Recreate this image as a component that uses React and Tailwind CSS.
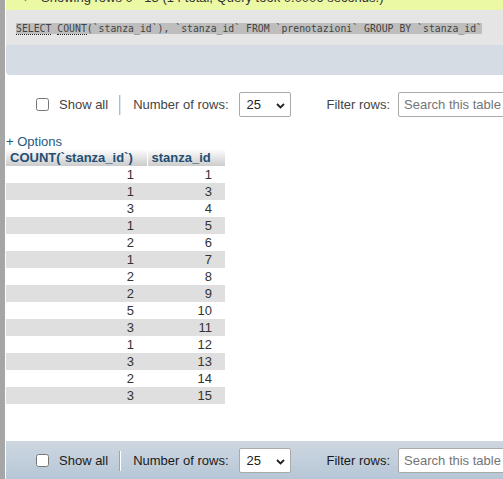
const rows = [
  [1, 1], [1, 3], [3, 4], [1, 5], [2, 6], [1, 7], [2, 8],
  [2, 9], [5, 10], [3, 11], [1, 12], [3, 13], [2, 14], [3, 15],
];

function NavRow({ bar }) {
  return (
    <div
      className={
        'flex items-center h-[39px] pl-[30px] text-[13px] leading-[15px] whitespace-nowrap ' +
        (bar ? 'bg-gradient-to-b from-[#ced7e1] to-[#b6c6d6] text-[#1a1a1a]' : 'text-[#444]')
      }
    >
      <input type="checkbox" readOnly className="w-[13px] h-[13px] m-0 shrink-0" />
      <span className="ml-[10px]">Show all</span>
      <span
        className={
          'ml-[11px] h-[20px] w-[2px] shrink-0 ' +
          (bar ? 'border-l border-[#9aa4ae] border-r-white border-r' : 'border-l border-[#a9bdd2] border-r border-r-[#dbe5ef]')
        }
      />
      <span className="ml-[12px]">Number of rows:</span>
      <div className="ml-[10px] relative flex items-center w-[52px] h-[25px] shrink-0 bg-white border border-[#aaa] rounded-[2px] pl-[7px] text-[#222]">
        25
        <svg className="absolute right-[5px] top-[10px]" width="9" height="6" viewBox="0 0 9 6">
          <path d="M1 1 L4.5 4.5 L8 1" fill="none" stroke="#222" strokeWidth="1.8" />
        </svg>
      </div>
      <span className="ml-[36px]">Filter rows:</span>
      <div className="ml-[8px] flex items-center w-[170px] h-[25px] shrink-0 bg-white border border-[#aaa] rounded-[2px] pl-[5px] text-[#757575]">
        Search this table
      </div>
    </div>
  );
}

export default function App() {
  return (
    <div className="flex w-[503px] h-[479px] overflow-hidden bg-white font-['Liberation_Sans',Arial,sans-serif]">
      {/* left frame edge */}
      <div className="w-[5px] shrink-0 bg-[#a6a6a6]" />
      <div className="ml-px flex-1 min-w-0 flex flex-col">
        {/* success message, mostly scrolled out of view */}
        <div className="h-[10px] overflow-hidden bg-[#ebf8a4] shrink-0">
          <div className="-mt-[10px] flex items-center h-[15px] text-[13px] leading-[15px] text-[#333] whitespace-nowrap">
            <svg className="ml-[15px] mt-[-4px]" width="12" height="12" viewBox="0 0 12 12">
              <path d="M1.5 6.5 L4.5 9.5 L10.5 2.5" fill="none" stroke="#5aa02c" strokeWidth="2.5" />
            </svg>
            <span className="ml-[8px]">Showing rows 0 - 13 (14 total, Query took 0.0006 seconds.)</span>
          </div>
        </div>

        {/* sql query box */}
        <div className="h-[35px] shrink-0 bg-[#e5e5e5] pt-[13px] pl-[10px] whitespace-nowrap font-['DejaVu_Sans_Mono',monospace] text-[9.8px] leading-[11px] text-[#444]">
          <span className="bg-[#bebebe]">
            <span className="border-b border-dotted border-[#222]">SELECT</span>{' '}
            <span className="border-b border-dotted border-[#222]">COUNT</span>(`stanza_id`), `stanza_id` FROM `prenotazioni` GROUP BY `stanza_id`
          </span>
        </div>
        <div className="h-[30px] shrink-0 bg-[#d5dce4] rounded-bl-[4px]" />

        <div className="mt-[10px]">
          <NavRow />
        </div>

        <div className="mt-[10px] text-[13px] leading-[15px] text-[#235a81]">+ Options</div>

        <table className="w-[219px] border-collapse text-[13px] leading-[15px]">
          <thead>
            <tr className="h-[17px]">
              <th className="w-[141px] p-0 pl-[4px] text-left font-bold text-[#1f4f74] bg-gradient-to-b from-white to-[#cccccc] border-r border-white">
                COUNT(`stanza_id`)
              </th>
              <th className="p-0 pl-[4px] text-left font-bold text-[#1f4f74] bg-gradient-to-b from-white to-[#cccccc]">
                stanza_id
              </th>
            </tr>
          </thead>
          <tbody>
            {rows.map(([c, id], i) => (
              <tr key={id} className={'h-[17px] ' + (i % 2 === 1 ? 'bg-[#dfdfdf]' : 'bg-white')}>
                <td className="p-0 pr-[13px] text-right text-[#333]">{c}</td>
                <td className="p-0 pr-[13px] text-right text-[#333]">{id}</td>
              </tr>
            ))}
          </tbody>
        </table>

        <div className="mt-[37px]">
          <NavRow bar />
        </div>
      </div>
    </div>
  );
}
